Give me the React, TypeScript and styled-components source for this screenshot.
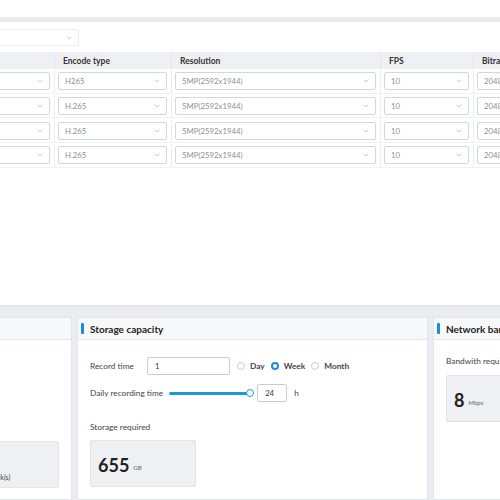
import React from "react";
import styled, { createGlobalStyle } from "styled-components";
import { ChevronDown } from "lucide-react";

const GlobalStyle = createGlobalStyle`
  html, body { margin: 0; padding: 0; background: #ffffff; }
  body { font-family: Lato, "Noto Sans", sans-serif; color: #333; }
  * { box-sizing: border-box; }
`;

const Page = styled.div`
  width: 500px;
  height: 500px;
  overflow: hidden;
  background: #e9edf1;
  display: flex;
  flex-direction: column;
`;

const TopStrip = styled.div`
  height: 17px;
  background: #ffffff;
  flex-shrink: 0;
`;

const Panel = styled.div`
  margin-top: 5px;
  height: 284px;
  flex-shrink: 0;
  background: #ffffff;
  border-bottom: 1px solid #dde2e7;
  overflow: hidden;
`;

const PanelInner = styled.div`
  margin-left: -61px;
  width: 700px;
  padding-top: 7px;
`;

const SelectBox = styled.div<{ $w?: number; $h?: number; $muted?: boolean }>`
  width: ${(p) => (p.$w ? `${p.$w}px` : "100%")};
  height: ${(p) => p.$h ?? 18}px;
  border: 1px solid ${(p) => (p.$muted ? "#ebedf0" : "#d3d7dc")};
  border-radius: 2px;
  background: #fff;
  display: flex;
  align-items: center;
  justify-content: space-between;
  padding: 0 5px 0 6px;
  font-size: 7.8px;
  color: #8f8f8f;
  white-space: nowrap;
  overflow: hidden;
`;

const Table = styled.div`
  margin-top: 6px;
`;

const cols = "116px 117px 209px 93px 160px";

const HeaderRow = styled.div`
  display: grid;
  grid-template-columns: ${cols};
  height: 17px;
  background: #eef0f3;
`;

const HeaderCell = styled.div`
  display: flex;
  align-items: center;
  padding-left: 8px;
  font-size: 8.5px;
  font-weight: 700;
  color: #333;
  border-right: 1px solid #e3e6ea;
  white-space: nowrap;
`;

const Row = styled.div`
  display: grid;
  grid-template-columns: ${cols};
  height: 24.7px;
  padding-top: 1px;
  border-bottom: 1px solid #f0f1f3;
`;

const Cell = styled.div`
  display: flex;
  align-items: center;
  padding: 0 4px 0 3px;
  border-right: 1px solid #eceef1;
`;

const BottomGap = styled.div`
  height: 11px;
  flex-shrink: 0;
`;

const Cards = styled.div`
  display: flex;
  gap: 5px;
  margin-left: -61px;
  height: 183px;
  flex-shrink: 0;
`;

const Card = styled.div<{ $w: number }>`
  width: ${(p) => p.$w}px;
  flex-shrink: 0;
  background: #ffffff;
  border: 1px solid #e2e6eb;
  display: flex;
  flex-direction: column;
`;

const CardHeader = styled.div`
  height: 22px;
  background: #f7f8fa;
  border-bottom: 1px solid #e4e7eb;
  display: flex;
  align-items: center;
  padding-left: 3px;
  flex-shrink: 0;
`;

const Accent = styled.span`
  width: 3px;
  height: 11px;
  background: #1e88e5;
  border-radius: 1px;
  margin-right: 6px;
`;

const CardTitle = styled.span`
  font-size: 10px;
  font-weight: 700;
  color: #222;
  white-space: nowrap;
`;

const CardBody = styled.div<{ $pt: number }>`
  padding: ${(p) => p.$pt}px 13px 0 12px;
  display: flex;
  flex-direction: column;
  flex: 1;
`;

const FormRow = styled.div`
  display: flex;
  align-items: center;
  height: 18px;
  margin-bottom: 9px;
`;

const Label = styled.span<{ $w?: number; $mt?: number }>`
  font-size: 8.3px;
  color: #444;
  white-space: nowrap;
  width: ${(p) => (p.$w ? `${p.$w}px` : "auto")};
  margin-top: ${(p) => p.$mt ?? 0}px;
  flex-shrink: 0;
`;

const TextInput = styled.div<{ $w: number; $ml?: number }>`
  width: ${(p) => p.$w}px;
  height: 18px;
  margin-left: ${(p) => p.$ml ?? 0}px;
  border: 1px solid #c9cdd2;
  border-radius: 2px;
  display: flex;
  align-items: center;
  padding-left: 7px;
  font-size: 7.6px;
  color: #333;
  flex-shrink: 0;
`;

const RadioGroup = styled.div`
  display: flex;
  align-items: center;
  margin-left: 7px;
  gap: 6px;
`;

const RadioItem = styled.label`
  display: flex;
  align-items: center;
  gap: 5px;
  font-size: 8.3px;
  font-weight: 700;
  color: #444;
`;

const RadioDot = styled.span<{ $on?: boolean }>`
  width: 8px;
  height: 8px;
  border-radius: 50%;
  border: ${(p) => (p.$on ? "2.4px solid #1e88e5" : "1px solid #c8ccd1")};
  background: #fff;
  flex-shrink: 0;
`;

const SliderTrack = styled.div`
  width: 81px;
  height: 3px;
  border-radius: 2px;
  background: #1e96e0;
  margin-left: 6px;
  position: relative;
  flex-shrink: 0;
`;

const SliderThumb = styled.span`
  position: absolute;
  right: -4px;
  top: 50%;
  width: 8px;
  height: 8px;
  margin-top: -4px;
  border-radius: 50%;
  border: 1.5px solid #1e96e0;
  background: #fff;
`;

const Unit = styled.span`
  font-size: 8.3px;
  color: #444;
  margin-left: 7px;
`;

const ValueBox = styled.div<{ $w: number; $column?: boolean; $mt?: number }>`
  width: ${(p) => p.$w}px;
  height: 47px;
  margin-top: ${(p) => p.$mt ?? 0}px;
  background: #eef0f3;
  border: 1px solid #e1e4e8;
  border-radius: 2px;
  display: flex;
  flex-direction: ${(p) => (p.$column ? "column" : "row")};
  align-items: ${(p) => (p.$column ? "flex-start" : "center")};
  justify-content: ${(p) => (p.$column ? "flex-end" : "flex-start")};
  padding: ${(p) => (p.$column ? "0 0 6px 16px" : "0 0 0 7px")};
  flex-shrink: 0;
`;

const BigNum = styled.span`
  font-size: 18px;
  font-weight: 700;
  color: #222;
  line-height: 1;
  margin-top: 3px;
`;

const SmallUnit = styled.span`
  font-size: 6px;
  color: #666;
  margin-left: 4px;
  margin-top: 7px;
`;

const BoxNote = styled.span`
  font-size: 7px;
  color: #444;
  white-space: nowrap;
`;

const Chevron = () => <ChevronDown size={8} strokeWidth={1.5} color="#999" />;

type RowData = { enc: string };
const rows: RowData[] = [{ enc: "H265" }, { enc: "H.265" }, { enc: "H.265" }, { enc: "H.265" }];

export default function App() {
  return (
    <>
      <GlobalStyle />
      <Page>
        <TopStrip />
        <Panel>
          <PanelInner>
            <SelectBox $w={140} $h={17} $muted>
              <span />
              <Chevron />
            </SelectBox>
            <Table>
              <HeaderRow>
                <HeaderCell>Channel</HeaderCell>
                <HeaderCell>Encode type</HeaderCell>
                <HeaderCell>Resolution</HeaderCell>
                <HeaderCell>FPS</HeaderCell>
                <HeaderCell>Bitrate</HeaderCell>
              </HeaderRow>
              {rows.map((r, i) => (
                <Row key={i}>
                  <Cell>
                    <SelectBox>
                      <span>Main stream</span>
                      <Chevron />
                    </SelectBox>
                  </Cell>
                  <Cell>
                    <SelectBox>
                      <span>{r.enc}</span>
                      <Chevron />
                    </SelectBox>
                  </Cell>
                  <Cell>
                    <SelectBox>
                      <span>5MP(2592x1944)</span>
                      <Chevron />
                    </SelectBox>
                  </Cell>
                  <Cell>
                    <SelectBox>
                      <span>10</span>
                      <Chevron />
                    </SelectBox>
                  </Cell>
                  <Cell>
                    <SelectBox>
                      <span>2048</span>
                      <Chevron />
                    </SelectBox>
                  </Cell>
                </Row>
              ))}
            </Table>
          </PanelInner>
        </Panel>
        <BottomGap />
        <Cards>
          <Card $w={133}>
            <CardHeader>
              <Accent />
              <CardTitle>HDD</CardTitle>
            </CardHeader>
            <CardBody $pt={101}>
              <ValueBox $w={107} $column>
                <BoxNote>1 Hard disk(s)</BoxNote>
              </ValueBox>
            </CardBody>
          </Card>
          <Card $w={351}>
            <CardHeader>
              <Accent />
              <CardTitle>Storage capacity</CardTitle>
            </CardHeader>
            <CardBody $pt={17}>
              <FormRow>
                <Label $w={57}>Record time</Label>
                <TextInput $w={83}>1</TextInput>
                <RadioGroup>
                  <RadioItem>
                    <RadioDot />
                    Day
                  </RadioItem>
                  <RadioItem>
                    <RadioDot $on />
                    Week
                  </RadioItem>
                  <RadioItem>
                    <RadioDot />
                    Month
                  </RadioItem>
                </RadioGroup>
              </FormRow>
              <FormRow>
                <Label>Daily recording time</Label>
                <SliderTrack>
                  <SliderThumb />
                </SliderTrack>
                <TextInput $w={30} $ml={7}>
                  24
                </TextInput>
                <Unit>h</Unit>
              </FormRow>
              <Label $mt={11}>Storage required</Label>
              <ValueBox $w={106} $mt={8}>
                <BigNum>655</BigNum>
                <SmallUnit>GB</SmallUnit>
              </ValueBox>
            </CardBody>
          </Card>
          <Card $w={200}>
            <CardHeader>
              <Accent />
              <CardTitle>Network bandwidth</CardTitle>
            </CardHeader>
            <CardBody $pt={16}>
              <Label>Bandwith required</Label>
              <ValueBox $w={120} $mt={9}>
                <BigNum>8</BigNum>
                <SmallUnit>Mbps</SmallUnit>
              </ValueBox>
            </CardBody>
          </Card>
        </Cards>
      </Page>
    </>
  );
}
